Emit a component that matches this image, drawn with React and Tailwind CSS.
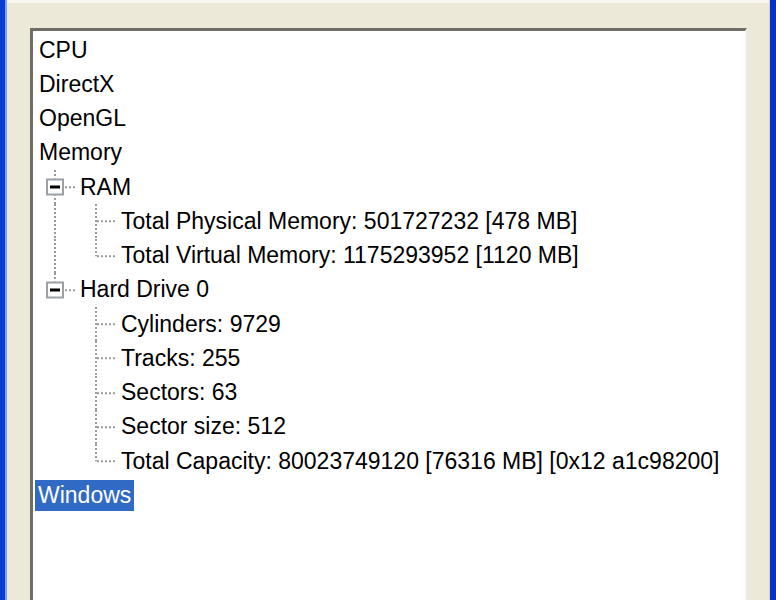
import React from "react";

const ROW_H = 34.25;

const rows = [
  { label: "CPU", level: 0 },
  { label: "DirectX", level: 0 },
  { label: "OpenGL", level: 0 },
  { label: "Memory", level: 0 },
  { label: "RAM", level: 1, box: true, last: false },
  { label: "Total Physical Memory: 501727232 [478 MB]", level: 2, parentLast: false, last: false },
  { label: "Total Virtual Memory: 1175293952 [1120 MB]", level: 2, parentLast: false, last: true },
  { label: "Hard Drive 0", level: 1, box: true, last: true },
  { label: "Cylinders: 9729", level: 2, parentLast: true, last: false },
  { label: "Tracks: 255", level: 2, parentLast: true, last: false },
  { label: "Sectors: 63", level: 2, parentLast: true, last: false },
  { label: "Sector size: 512", level: 2, parentLast: true, last: false },
  { label: "Total Capacity: 80023749120 [76316 MB] [0x12 a1c98200]", level: 2, parentLast: true, last: true },
  { label: "Windows", level: 0, selected: true },
];

// dotted connector lines for one row
function Guides({ row }) {
  const w = row.level * 41;
  const mid = ROW_H / 2;
  const dot = { stroke: "#9a9a9a", strokeWidth: 2, strokeDasharray: "2 2" };
  return (
    <svg width={w} height={ROW_H} className="shrink-0">
      {row.level === 1 && (
        <>
          <line x1="20" y1="0" x2="20" y2={row.last ? mid - 7 : ROW_H} {...dot} />
          <line x1="30" y1={mid} x2="41" y2={mid} {...dot} />
        </>
      )}
      {row.level === 2 && (
        <>
          {!row.parentLast && <line x1="20" y1="0" x2="20" y2={ROW_H} {...dot} />}
          <line x1="61" y1="0" x2="61" y2={row.last ? mid : ROW_H} {...dot} />
          <line x1="62" y1={mid} x2="82" y2={mid} {...dot} />
        </>
      )}
    </svg>
  );
}

function MinusBox() {
  return (
    <div className="absolute left-[11px] top-1/2 -translate-y-1/2 w-[18px] h-[17px] border-2 border-[#9aa0a3] bg-white flex items-center justify-center">
      <div className="w-[10px] h-[3px] bg-black" />
    </div>
  );
}

export default function App() {
  return (
    <div
      className="w-[776px] h-[600px] overflow-hidden flex bg-[#ECE9D8]"
      style={{ fontFamily: '"Liberation Sans", Arial, sans-serif' }}
    >
      {/* left frame */}
      <div className="w-[5px] bg-[#0B3BD6]" />
      <div className="w-[2px] bg-[#7EA2F0]" />

      <div className="flex-1 flex flex-col">
        <div className="h-[3px] bg-[#F7F6EF]" />
        <div className="flex-1 pt-[25px] pl-[23px] pr-[22px]">
          <div className="h-full bg-white border-t-[3px] border-l-[3px] border-r-2 border-[#6F6E66] border-r-[#F4F2E8] pt-[2px] pl-[2px]">
            {rows.map((row) => (
              <div key={row.label} className="flex items-center" style={{ height: ROW_H }}>
                {row.level > 0 && (
                  <div className="relative flex shrink-0">
                    <Guides row={row} />
                    {row.box && <MinusBox />}
                  </div>
                )}
                <span
                  className={
                    "text-[23px] leading-none whitespace-nowrap " +
                    (row.selected
                      ? "bg-[#316AC5] text-white px-[3px] h-[31px] flex items-center"
                      : "text-black ml-[3px] px-[1px]")
                  }
                >
                  {row.label}
                </span>
              </div>
            ))}
          </div>
        </div>
      </div>

      {/* right frame */}
      <div className="w-[1px] bg-[#D8D2BD]" />
      <div className="w-[6px] bg-[#0831C9]" />
    </div>
  );
}
